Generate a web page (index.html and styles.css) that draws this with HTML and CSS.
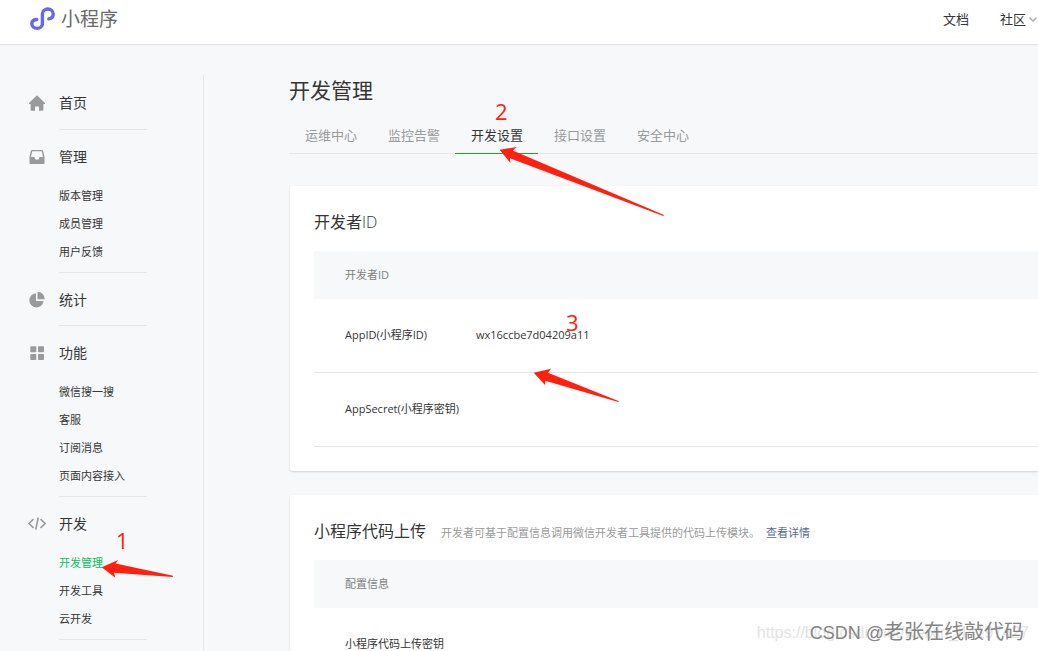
FILE: index.html
```html
<!DOCTYPE html>
<html lang="zh-CN">
<head>
<meta charset="utf-8">
<title>小程序</title>
<link rel="stylesheet" href="styles.css">
</head>
<body>
<div class="page">
  <header class="topbar">
    <a class="brand" href="#">
      <svg class="brand-logo" width="27" height="24" viewBox="0 0 27 24" fill="none" stroke="#6467f0" stroke-width="3.4" stroke-linecap="round" aria-hidden="true"><path d="M7.800 12.500C4.900 12.800 2.800 14.300 2.800 16.700a5.300 4.700 0 0 0 10.600 0V6.900a5.400 4.900 0 0 1 10.800 0c0 2.600-1.800 4.500-4.400 5"/></svg>
      <span>小程序</span>
    </a>
    <nav class="topnav">
      <a href="#">文档</a>
      <a class="with-caret" href="#">社区<svg width="8" height="6" viewBox="0 0 8 6" fill="none" stroke="#b2b2b2" stroke-width="1.6" aria-hidden="true"><path d="M.5 1.500 4 5 7.500 1.500"/></svg></a>
    </nav>
  </header>
  <div class="body">
    <nav class="sidebar">
      <section class="group">
        <a class="group-title" href="#"><svg width="18" height="18" viewBox="0 0 18 18" fill="#9a9a9a" aria-hidden="true"><path d="M9 1.200 1 9v1h1.600v6c0 .5.3.8.8.8H7v-4.300h4v4.300h3.600c.5 0 .8-.3.8-.8v-6H17V9z"/></svg>首页</a>
      </section>
      <section class="group">
        <a class="group-title" href="#"><svg width="18" height="18" viewBox="0 0 18 18" fill="#9a9a9a" fill-rule="evenodd" aria-hidden="true"><path d="M4 2h10c.6 0 1 .3 1.200.9L16.500 9v6c0 .6-.4 1-1 1h-13c-.6 0-1-.4-1-1V9l1.300-6.100C3 2.300 3.400 2 4 2zm.2 1.300L3 9h3.200c.3 0 .5.2.5.5 0 1.300.9 2.300 2.300 2.300s2.300-1 2.300-2.300c0-.3.2-.5.5-.5H15l-1.200-5.700z"/></svg>管理</a>
        <ul class="sub">
          <li><a href="#">版本管理</a></li>
          <li><a href="#">成员管理</a></li>
          <li><a href="#">用户反馈</a></li>
        </ul>
      </section>
      <section class="group">
        <a class="group-title" href="#"><svg width="18" height="18" viewBox="0 0 18 18" fill="#9a9a9a" aria-hidden="true"><path d="M8 2.200A7.100 7.100 0 1 0 15.500 10H8z"/><path d="M9.500.8A7.500 7.500 0 0 1 16.800 8.300H9.500z"/></svg>统计</a>
      </section>
      <section class="group">
        <a class="group-title" href="#"><svg width="18" height="18" viewBox="0 0 18 18" fill="#9a9a9a" aria-hidden="true"><rect x="2.300" y="2.300" width="6" height="6" rx=".8"/><rect x="10" y="2.300" width="6" height="6" rx=".8"/><rect x="2.300" y="10" width="6" height="6" rx=".8"/><rect x="10" y="10" width="6" height="6" rx=".8"/></svg>功能</a>
        <ul class="sub">
          <li><a href="#">微信搜一搜</a></li>
          <li><a href="#">客服</a></li>
          <li><a href="#">订阅消息</a></li>
          <li><a href="#">页面内容接入</a></li>
        </ul>
      </section>
      <section class="group">
        <a class="group-title" href="#"><svg width="18" height="18" viewBox="0 0 18 18" fill="none" stroke="#9a9a9a" stroke-width="1.600" aria-hidden="true"><path d="M5.500 4.200.9 8.500l4.600 4.300M12.500 4.200l4.600 4.300-4.600 4.300M10.300 2.500 7.700 14.700"/></svg>开发</a>
        <ul class="sub">
          <li><a class="current" href="#">开发管理</a></li>
          <li><a href="#">开发工具</a></li>
          <li><a href="#">云开发</a></li>
        </ul>
      </section>
    </nav>
    <main class="main">
      <h1>开发管理</h1>
      <nav class="tabs">
        <a href="#">运维中心</a>
        <a href="#">监控告警</a>
        <a class="active" href="#">开发设置</a>
        <a href="#">接口设置</a>
        <a href="#">安全中心</a>
      </nav>
      <section class="card">
        <div class="card-head"><h2>开发者<span class="light">ID</span></h2></div>
        <table>
          <thead><tr><th colspan="2">开发者ID</th></tr></thead>
          <tbody>
            <tr><td class="name">AppID(小程序ID)</td><td>wx16ccbe7d04209a11</td></tr>
            <tr><td class="name">AppSecret(小程序密钥)</td><td></td></tr>
          </tbody>
        </table>
      </section>
      <section class="card">
        <div class="card-head">
          <h2>小程序代码上传</h2>
          <p>开发者可基于配置信息调用微信开发者工具提供的代码上传模块。<a href="#">查看详情</a></p>
        </div>
        <table>
          <thead><tr><th colspan="2">配置信息</th></tr></thead>
          <tbody>
            <tr><td class="name">小程序代码上传密钥</td><td></td></tr>
          </tbody>
        </table>
      </section>
    </main>
  </div>
  <svg class="notes" width="700" height="651" viewBox="0 0 700 651" fill="#ff2010" aria-hidden="true">
    <path d="M101.700 567.300 118.300 560 115.500 563.500 173 575.700 172.700 577 114 572.700 115.300 577.700z"/>
    <path d="M499.700 149.700 517 147 512.700 150.500 664 215 663.300 216 510 158.300 510.300 163z"/>
    <path d="M533.700 372.700 551 368.700 548 372.700 619 401.300 618.300 402 545.300 380.700 545 385z"/>
    <text x="116" y="549">1</text>
    <text x="495" y="120">2</text>
    <text x="566" y="331">3</text>
  </svg>
  <div class="watermark-url">https://blog.csdn.net/weixin_44197427</div>
  <div class="watermark"><span class="latin">CSDN @</span>老张在线敲代码</div>
</div>
</body>
</html>
```
FILE: styles.css
```css
* { box-sizing: border-box; }
body {
  margin: 0;
  background: #f6f8fa;
  color: #353535;
  font: 11px/20px "Open Sans", "Noto Sans CJK SC", sans-serif;
}
a { color: inherit; text-decoration: none; }
h1, h2, p, ul { margin: 0; padding: 0; font-weight: 400; }
ul { list-style: none; }

.page {
  position: relative;
  display: flex;
  flex-direction: column;
  height: 100vh;
  overflow: hidden;
}
.topbar {
  display: flex;
  flex: none;
  justify-content: space-between;
  height: 45px;
  padding-left: 29px;
  padding-bottom: 6px;
  background: #fff;
  border-bottom: 1px solid #e0e2e4;
}
.brand {
  display: flex;
  align-items: center;
  gap: 5px;
  color: #6a6a6a;
  font-size: 19px;
}
.topnav {
  display: flex;
  align-items: center;
  gap: 31px;
  padding-right: 1px;
  font-size: 13px;
}
.with-caret { display: flex; align-items: center; gap: 3px; }

.body { display: flex; flex: 1; min-height: 0; }
.sidebar {
  flex: none;
  width: 204px;
  margin-top: 30px;
  padding: 1px 56px 0 28px;
  border-right: 1px solid #e4e6e8;
}
.group { padding-top: 17px; }
.group:first-child .group-title { margin-bottom: 16px; }
.group::after {
  content: "";
  display: block;
  height: 1px;
  margin-left: 31px;
  background: #e4e6e8;
}
.group-title {
  display: flex;
  align-items: center;
  gap: 13px;
  height: 20px;
  margin-bottom: 15px;
  font-size: 14px;
}
.sub { margin-left: 31px; padding-bottom: 6px; line-height: 28px; }
.sub .current { color: #07c160; }

.main {
  flex: 1;
  min-width: 0;
  padding: 29px 0 0 85px;
}
h1 { font-size: 21px; line-height: 32px; }
.tabs {
  display: flex;
  margin: 13px 0 32px;
  border-bottom: 1px solid #e4e6e8;
  font-size: 13px;
  line-height: 32px;
  color: #9a9a9a;
}
.tabs a {
  margin-bottom: -1px;
  padding: 0 15px 2px 16px;
  border-bottom: 1px solid transparent;
}
.tabs .active { color: #353535; border-color: #1aad19; }

.card {
  margin: 0 0 24px 1px;
  padding: 24px 0 24px 24px;
  background: #fff;
  border-radius: 3px 0 0 3px;
  box-shadow: 0 1px 2px rgba(0, 0, 0, .15);
}
.card-head { display: flex; align-items: baseline; gap: 15px; margin-bottom: 17px; }
.card-head p { color: #9a9a9a; }
.card-head p a { margin-left: 6px; color: #576b95; }
h2 { font-size: 16px; line-height: 24px; }
.light { font-weight: 300; }

table { width: 100%; border-collapse: separate; border-spacing: 0; }
th, td { padding: 0; text-align: left; font-weight: 400; }
th { height: 48px; padding-left: 31px; background: #f6f8fa; color: #7e8081; }
td { height: 74px; padding-bottom: 2px; border-bottom: 1px solid #e4e6e8; }
.name { width: 162px; padding-left: 31px; white-space: nowrap; }

.notes { position: absolute; top: 0; left: 0; pointer-events: none; }
.notes text { font-size: 22px; }
.watermark-url, .watermark { position: absolute; white-space: nowrap; }
.watermark-url {
  right: 9px;
  bottom: 8px;
  color: #e4e4e4;
  font: 16px/20px "Liberation Sans", sans-serif;
}
.watermark {
  right: 14px;
  bottom: 5px;
  color: #858585;
  font: 20px/26px "Liberation Sans", "Noto Sans CJK SC", sans-serif;
}
.watermark .latin { font-size: 18px; }
```
